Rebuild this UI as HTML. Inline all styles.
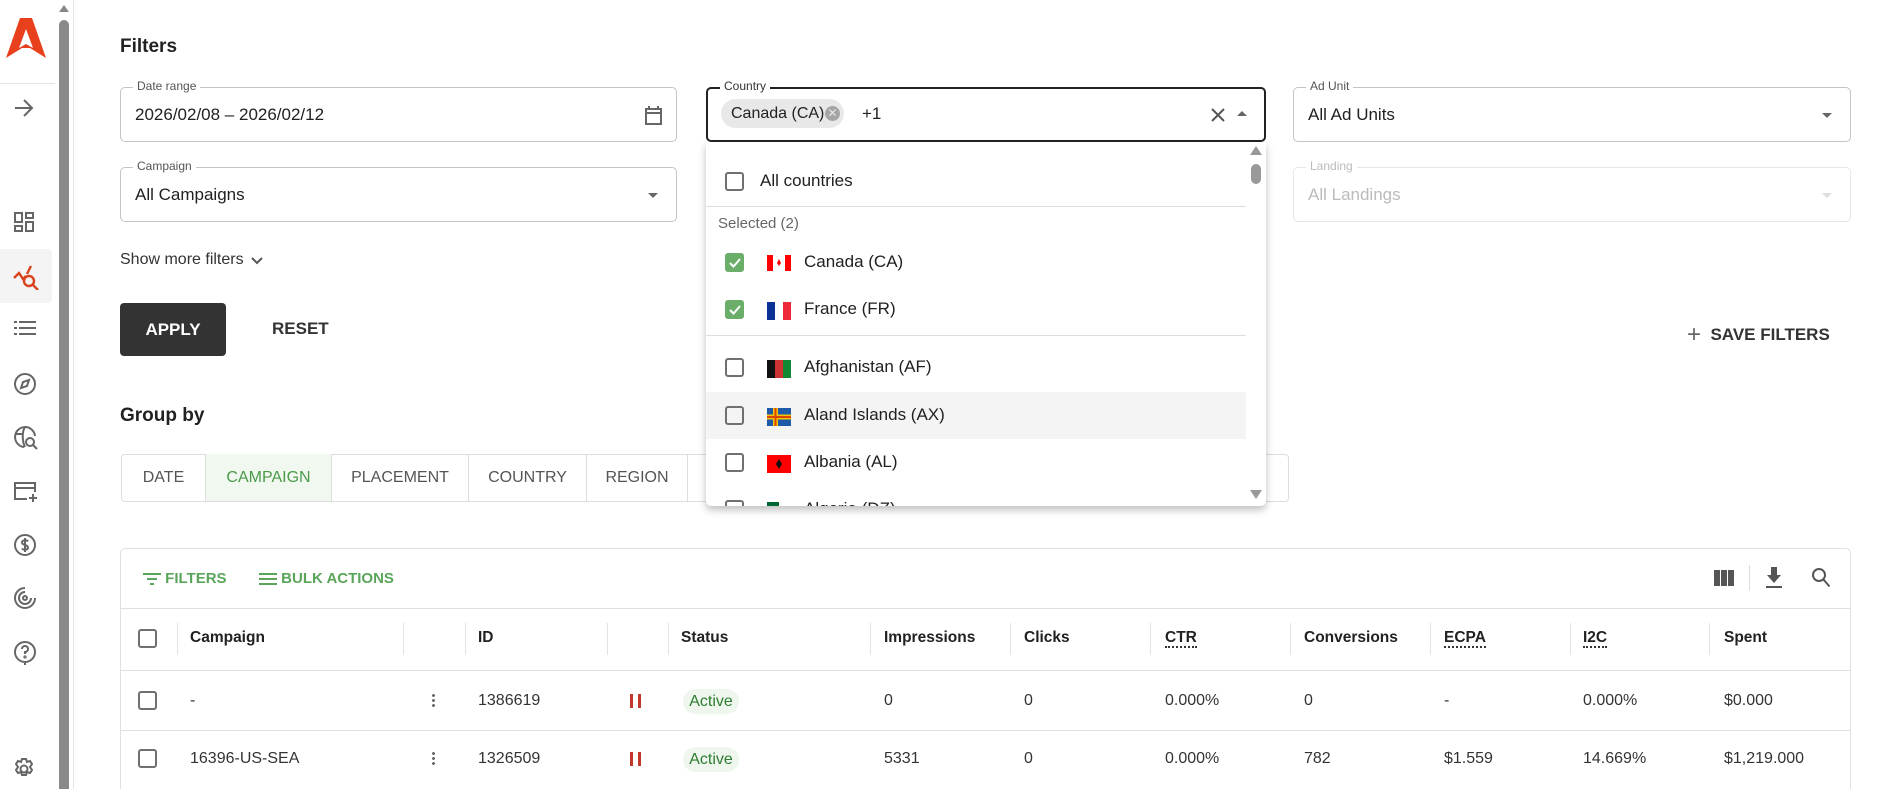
<!DOCTYPE html>
<html><head><meta charset="utf-8"><style>
*{box-sizing:border-box;margin:0;padding:0}
html,body{width:1885px;height:789px;overflow:hidden}
body{background:#fff;font-family:"Liberation Sans",sans-serif;color:#212121;position:relative}
.a{position:absolute}
.fld{position:absolute;border:1px solid #c4c4c4;border-radius:5px;height:55px}
.lbl{position:absolute;top:-9px;left:12px;background:#fff;padding:0 4px;font-size:12px;color:#555}
.val{position:absolute;left:14px;top:17px;font-size:17px}
.caret{position:absolute;right:18px;top:25px;width:0;height:0;border-left:5px solid transparent;border-right:5px solid transparent;border-top:5px solid #666}
.cb{position:absolute;width:19px;height:19px;border:2px solid #707070;border-radius:3px}
.cb.on{background:#6aae6a;border-color:#6aae6a}
.item{position:absolute;left:0;width:540px;height:47px;font-size:17px}
.th{position:absolute;top:629px;font-size:15.5px;font-weight:bold;color:#212121}
.td{position:absolute;font-size:16px;color:#333}
.sep{position:absolute;top:623px;width:1px;height:32px;background:#e3e3e3}
.dot{border-bottom:2px dotted #333}
.tab{position:absolute;top:454px;height:47px;line-height:47px;font-size:16px;color:#555;text-align:center;border-right:1px solid #ddd}
.active{position:absolute;width:56px;height:25px;border-radius:13px;background:#eef6ee;color:#2e7d32;font-size:16px;text-align:center;line-height:25px}
.pause{position:absolute;width:11px;height:14px;border-left:3px solid #c0392b;border-right:3px solid #c0392b}
.kb{position:absolute;width:3px;height:15px;background:radial-gradient(circle,#666 1.3px,transparent 1.6px) 0 0/3px 5px}
svg{position:absolute}
</style></head><body>
<!-- sidebar -->
<div class="a" style="left:0;top:0;width:58px;height:789px;background:#fff"></div>
<svg style="left:6px;top:16px" width="40" height="44" viewBox="0 0 40 44"><path d="M14 2h12l14 40-16-10h-8L0 42z M20 13l-7 19 7-4 7 4z" fill="#e8401c" fill-rule="evenodd"/></svg>
<div class="a" style="left:0;top:83px;width:55px;height:1px;background:#e3e3e3"></div>
<svg style="left:13px;top:98px" width="22" height="20" viewBox="0 0 22 20"><path d="M2 10h17M11 2l8 8-8 8" stroke="#666" stroke-width="2" fill="none"/></svg>
<svg style="left:14px;top:212px" width="20" height="20" viewBox="0 0 20 20" fill="none" stroke="#666" stroke-width="2"><rect x="1" y="1" width="7" height="9"/><rect x="12" y="1" width="7" height="5"/><rect x="1" y="14" width="7" height="5"/><rect x="12" y="10" width="7" height="9"/></svg>
<div class="a" style="left:0;top:249px;width:52px;height:54px;background:#f4f4f4;border-radius:0 4px 4px 0"></div>
<svg style="left:12px;top:264px" width="28" height="26" viewBox="0 0 28 26" fill="none" stroke="#d9431e" stroke-width="2.4"><path d="M2 14l5-5 4 6 3-3M19 2l-4 8"/><circle cx="17" cy="17" r="5"/><path d="M21 21l5 5"/></svg>
<svg style="left:14px;top:320px" width="22" height="16" viewBox="0 0 22 16" fill="#666"><rect x="0" y="1" width="3" height="2"/><rect x="5" y="1" width="17" height="2"/><rect x="0" y="7" width="3" height="2"/><rect x="5" y="7" width="17" height="2"/><rect x="0" y="13" width="3" height="2"/><rect x="5" y="13" width="17" height="2"/></svg>
<svg style="left:13px;top:372px" width="24" height="24" viewBox="0 0 24 24" fill="none" stroke="#666" stroke-width="2"><circle cx="12" cy="12" r="10"/><path d="M16 8l-6 2-2 6 6-2z"/></svg>
<svg style="left:13px;top:425px" width="26" height="26" viewBox="0 0 26 26" fill="none" stroke="#666" stroke-width="2"><path d="M22 11A10 10 0 1 0 11 22"/><path d="M3 9h6M12 2c-3 4-3 14 0 20"/><circle cx="17" cy="17" r="4"/><path d="M20 20l4 4"/></svg>
<svg style="left:13px;top:480px" width="26" height="24" viewBox="0 0 26 24" fill="none" stroke="#666" stroke-width="2"><path d="M14 19H2V3h20v9"/><path d="M2 8h20"/><path d="M20 14v8M16 18h8"/></svg>
<svg style="left:13px;top:533px" width="24" height="24" viewBox="0 0 24 24" fill="none" stroke="#666" stroke-width="2"><circle cx="12" cy="12" r="10"/><path d="M15 8.5c-1-1.5-6-2-6 1 0 3 6 2 6 5 0 3-5 2.5-6 1M12 5v14"/></svg>
<svg style="left:13px;top:586px" width="24" height="24" viewBox="0 0 24 24" fill="none" stroke="#666" stroke-width="2"><path d="M12 2a10 10 0 1 0 10 10"/><path d="M12 6a6 6 0 1 0 6 6"/><circle cx="12" cy="12" r="2"/></svg>
<svg style="left:13px;top:640px" width="24" height="26" viewBox="0 0 24 26" fill="none" stroke="#666" stroke-width="2"><path d="M12 22a10 10 0 1 1 0-20 10 10 0 0 1 0 20l0 3"/><path d="M9 9a3 3 0 1 1 3 3v2"/><circle cx="12" cy="17" r=".6"/></svg>
<svg style="left:12px;top:757px" width="24" height="24" viewBox="0 0 24 24" fill="none" stroke="#666" stroke-width="2"><circle cx="12" cy="12" r="3.5"/><path d="M10 2h4l1 3 3-1 2 3-2 3 2 3-2 3-3-1-1 3h-4l-1-3-3 1-2-3 2-3-2-3 2-3 3 1z"/></svg>
<!-- scrollbar -->
<div class="a" style="left:58px;top:0;width:13px;height:789px;background:#fff"></div>
<div class="a" style="left:59px;top:5px;width:0;height:0;border-left:5px solid transparent;border-right:5px solid transparent;border-bottom:7px solid #888"></div>
<div class="a" style="left:59px;top:20px;width:10px;height:769px;background:#8a8a8a;border-radius:5px 5px 0 0"></div>
<div class="a" style="left:73px;top:0;width:1px;height:789px;background:#e6e6e6"></div>

<div class="a" style="left:120px;top:36px;font-size:19px;font-weight:bold;color:#222">Filters</div>

<div class="fld" style="left:120px;top:87px;width:557px"><span class="lbl">Date range</span><span class="val">2026/02/08 – 2026/02/12</span>
<svg style="right:14px;top:18px" width="17" height="19" viewBox="0 0 17 19" fill="none" stroke="#666" stroke-width="2"><rect x="1" y="3" width="15" height="15"/><path d="M1 7h15M4 0v4M13 0v4"/></svg></div>
<div class="fld" style="left:706px;top:87px;width:560px;border:2px solid #222"><span class="lbl" style="top:-10px;color:#333">Country</span>
<div class="a" style="left:13px;top:10px;width:123px;height:29px;border-radius:15px;background:#e8e8e8;font-size:16px;line-height:29px;padding-left:10px">Canada (CA)</div>
<div class="a" style="left:117px;top:17px;width:15px;height:15px;border-radius:50%;background:#a5a5a5;color:#e8e8e8;font-size:12px;line-height:15px;text-align:center">✕</div>
<span class="val" style="left:154px;top:15px">+1</span>
<svg style="left:502px;top:18px" width="16" height="16" viewBox="0 0 16 16" stroke="#555" stroke-width="2"><path d="M2 2l12 12M14 2L2 14"/></svg>
<div class="a" style="right:17px;top:22px;border-left:5px solid transparent;border-right:5px solid transparent;border-bottom:5px solid #666"></div></div>
<div class="fld" style="left:1293px;top:87px;width:558px"><span class="lbl">Ad Unit</span><span class="val">All Ad Units</span><div class="caret"></div></div>
<div class="fld" style="left:120px;top:167px;width:557px"><span class="lbl">Campaign</span><span class="val">All Campaigns</span><div class="caret"></div></div>
<div class="fld" style="left:1293px;top:167px;width:558px;border-color:#e6e6e6"><span class="lbl" style="color:#bbb">Landing</span><span class="val" style="color:#bbb">All Landings</span><div class="caret" style="border-top-color:#ddd"></div></div>

<div class="a" style="left:120px;top:251px;font-size:16px;color:#333">Show more filters <svg style="position:relative;top:2px;left:2px" width="14" height="10" viewBox="0 0 14 10"><path d="M2 2l5 5 5-5" stroke="#555" stroke-width="2" fill="none"/></svg></div>
<div class="a" style="left:120px;top:303px;width:106px;height:53px;background:#333;border-radius:4px;color:#fff;font-size:17px;font-weight:bold;text-align:center;line-height:53px">APPLY</div>
<div class="a" style="left:272px;top:319px;font-size:17px;font-weight:bold;color:#333">RESET</div>
<div class="a" style="left:1687px;top:319px;font-size:17px;font-weight:bold;color:#333"><span style="font-weight:normal;color:#666;font-size:24px;position:relative;top:2px">+</span>&nbsp; SAVE FILTERS</div>

<div class="a" style="left:120px;top:405px;font-size:19px;font-weight:bold;color:#222">Group by</div>
<div class="a" style="left:121px;top:454px;width:1168px;height:48px;border:1px solid #ddd;border-radius:4px"></div>
<div class="tab" style="left:122px;width:84px">DATE</div>
<div class="tab" style="left:206px;width:126px;background:#f1f8f0;color:#4a9a4a">CAMPAIGN</div>
<div class="tab" style="left:332px;width:137px">PLACEMENT</div>
<div class="tab" style="left:469px;width:118px">COUNTRY</div>
<div class="tab" style="left:587px;width:101px">REGION</div>

<!-- table -->
<div class="a" style="left:120px;top:548px;width:1731px;height:260px;border:1px solid #e0e0e0;border-radius:5px"></div>
<div class="a" style="left:143px;top:569px;font-size:15px;font-weight:bold;color:#5aa55a"><svg style="position:relative;top:3px" width="18" height="14" viewBox="0 0 18 14" fill="#5aa55a"><rect x="0" y="1" width="18" height="2"/><rect x="4" y="6" width="10" height="2"/><rect x="7" y="11" width="4" height="2"/></svg> FILTERS</div>
<div class="a" style="left:259px;top:569px;font-size:15px;font-weight:bold;color:#5aa55a"><svg style="position:relative;top:3px" width="18" height="14" viewBox="0 0 18 14" fill="#5aa55a"><rect x="0" y="1" width="18" height="2"/><rect x="0" y="6" width="18" height="2"/><rect x="0" y="11" width="18" height="2"/></svg> BULK ACTIONS</div>
<svg style="left:1714px;top:570px" width="20" height="16" viewBox="0 0 20 16" fill="#555"><rect x="0" y="0" width="6" height="16"/><rect x="7" y="0" width="6" height="16"/><rect x="14" y="0" width="6" height="16"/></svg>
<div class="a" style="left:1749px;top:565px;width:1px;height:26px;background:#ddd"></div>
<svg style="left:1765px;top:567px" width="18" height="22" viewBox="0 0 18 22" fill="#555"><path d="M6 0h6v8h4l-7 8-7-8h4z"/><rect x="1" y="19" width="16" height="2"/></svg>
<svg style="left:1811px;top:567px" width="20" height="22" viewBox="0 0 20 22" fill="none" stroke="#555" stroke-width="2"><circle cx="8" cy="8" r="6"/><path d="M12.5 12.5l6 7"/></svg>
<div class="a" style="left:121px;top:608px;width:1729px;height:1px;background:#e0e0e0"></div>
<div class="a" style="left:121px;top:670px;width:1729px;height:1px;background:#e0e0e0"></div>
<div class="a" style="left:121px;top:730px;width:1729px;height:1px;background:#e0e0e0"></div>
<div class="sep" style="left:177px"></div><div class="sep" style="left:403px"></div><div class="sep" style="left:465px"></div><div class="sep" style="left:607px"></div><div class="sep" style="left:668px"></div><div class="sep" style="left:870px"></div><div class="sep" style="left:1010px"></div><div class="sep" style="left:1150px"></div><div class="sep" style="left:1290px"></div><div class="sep" style="left:1430px"></div><div class="sep" style="left:1570px"></div><div class="sep" style="left:1709px"></div>
<div class="cb" style="left:138px;top:629px"></div>
<div class="th" style="left:190px">Campaign</div><div class="th" style="left:478px">ID</div><div class="th" style="left:681px">Status</div><div class="th" style="left:884px">Impressions</div><div class="th" style="left:1024px">Clicks</div><div class="th" style="left:1165px"><span class="dot">CTR</span></div><div class="th" style="left:1304px">Conversions</div><div class="th" style="left:1444px"><span class="dot">ECPA</span></div><div class="th" style="left:1583px"><span class="dot">I2C</span></div><div class="th" style="left:1724px">Spent</div>
<div class="cb" style="left:138px;top:691px"></div>
<div class="td" style="left:190px;top:692px">-</div><div class="kb" style="left:432px;top:693px"></div><div class="td" style="left:478px;top:692px">1386619</div><div class="pause" style="left:630px;top:694px"></div><div class="active" style="left:683px;top:689px">Active</div><div class="td" style="left:884px;top:692px">0</div><div class="td" style="left:1024px;top:692px">0</div><div class="td" style="left:1165px;top:692px">0.000%</div><div class="td" style="left:1304px;top:692px">0</div><div class="td" style="left:1444px;top:692px">-</div><div class="td" style="left:1583px;top:692px">0.000%</div><div class="td" style="left:1724px;top:692px">$0.000</div>
<div class="cb" style="left:138px;top:749px"></div>
<div class="td" style="left:190px;top:750px">16396-US-SEA</div><div class="kb" style="left:432px;top:751px"></div><div class="td" style="left:478px;top:750px">1326509</div><div class="pause" style="left:630px;top:752px"></div><div class="active" style="left:683px;top:747px">Active</div><div class="td" style="left:884px;top:750px">5331</div><div class="td" style="left:1024px;top:750px">0</div><div class="td" style="left:1165px;top:750px">0.000%</div><div class="td" style="left:1304px;top:750px">782</div><div class="td" style="left:1444px;top:750px">$1.559</div><div class="td" style="left:1583px;top:750px">14.669%</div><div class="td" style="left:1724px;top:750px">$1,219.000</div>

<!-- dropdown -->
<div class="a" style="left:706px;top:142px;width:560px;height:364px;background:#fff;border-radius:0 0 5px 5px;box-shadow:0 4px 8px rgba(0,0,0,.25);overflow:hidden">
<div class="item" style="top:16px"><div class="cb" style="left:19px;top:14px"></div><span class="a" style="left:54px;top:13px">All countries</span></div>
<div class="a" style="left:0;top:64px;width:540px;height:1px;background:#ddd"></div>
<div class="a" style="left:12px;top:73px;font-size:15px;color:#666">Selected (2)</div>
<div class="item" style="top:97px"><div class="cb on" style="left:19px;top:14px"><svg style="left:1px;top:1px" width="14" height="14" viewBox="0 0 14 14"><path d="M2 7l3.5 3.5L12 3" stroke="#fff" stroke-width="2" fill="none"/></svg></div>
<svg style="left:61px;top:16px" width="24" height="16" viewBox="0 0 24 16"><rect width="24" height="16" fill="#fff"/><rect width="6" height="16" fill="#f00"/><rect x="18" width="6" height="16" fill="#f00"/><path d="M12 4l2 4-2 3-2-3z" fill="#f00"/></svg><span class="a" style="left:98px;top:13px">Canada (CA)</span></div>
<div class="item" style="top:144px"><div class="cb on" style="left:19px;top:14px"><svg style="left:1px;top:1px" width="14" height="14" viewBox="0 0 14 14"><path d="M2 7l3.5 3.5L12 3" stroke="#fff" stroke-width="2" fill="none"/></svg></div>
<svg style="left:61px;top:16px" width="24" height="18" viewBox="0 0 24 18"><rect width="8" height="18" fill="#0a3296"/><rect x="8" width="8" height="18" fill="#fff"/><rect x="16" width="8" height="18" fill="#ee2a3a"/></svg><span class="a" style="left:98px;top:13px">France (FR)</span></div>
<div class="a" style="left:0;top:193px;width:540px;height:1px;background:#ddd"></div>
<div class="item" style="top:202px"><div class="cb" style="left:19px;top:14px"></div><svg style="left:61px;top:16px" width="24" height="18" viewBox="0 0 24 18"><rect width="8" height="18" fill="#111"/><rect x="8" width="8" height="18" fill="#c33"/><rect x="16" width="8" height="18" fill="#118833"/></svg><span class="a" style="left:98px;top:13px">Afghanistan (AF)</span></div>
<div class="item" style="top:250px;background:#f4f4f4"><div class="cb" style="left:19px;top:14px"></div><svg style="left:61px;top:16px" width="24" height="18" viewBox="0 0 24 18"><rect width="24" height="18" fill="#1e5aa8"/><rect x="6" width="5" height="18" fill="#f2c500"/><rect y="6.5" width="24" height="5" fill="#f2c500"/><rect x="7.5" width="2" height="18" fill="#d40"/><rect y="8" width="24" height="2" fill="#d40"/></svg><span class="a" style="left:98px;top:13px">Aland Islands (AX)</span></div>
<div class="item" style="top:297px"><div class="cb" style="left:19px;top:14px"></div><svg style="left:61px;top:16px" width="24" height="18" viewBox="0 0 24 18"><rect width="24" height="18" fill="#f00"/><path d="M12 4l3 5-3 5-3-5z" fill="#111"/></svg><span class="a" style="left:98px;top:13px">Albania (AL)</span></div>
<div class="item" style="top:344px"><div class="cb" style="left:19px;top:14px"></div><svg style="left:61px;top:16px" width="24" height="18" viewBox="0 0 24 18"><rect width="12" height="18" fill="#063"/><rect x="12" width="12" height="18" fill="#fff"/></svg><span class="a" style="left:98px;top:13px">Algeria (DZ)</span></div>
<div class="a" style="left:544px;top:4px;border-left:6px solid transparent;border-right:6px solid transparent;border-bottom:9px solid #999"></div>
<div class="a" style="left:545px;top:22px;width:10px;height:20px;background:#999;border-radius:5px"></div>
<div class="a" style="left:544px;top:348px;border-left:6px solid transparent;border-right:6px solid transparent;border-top:9px solid #999"></div>
</div>
</body></html>
